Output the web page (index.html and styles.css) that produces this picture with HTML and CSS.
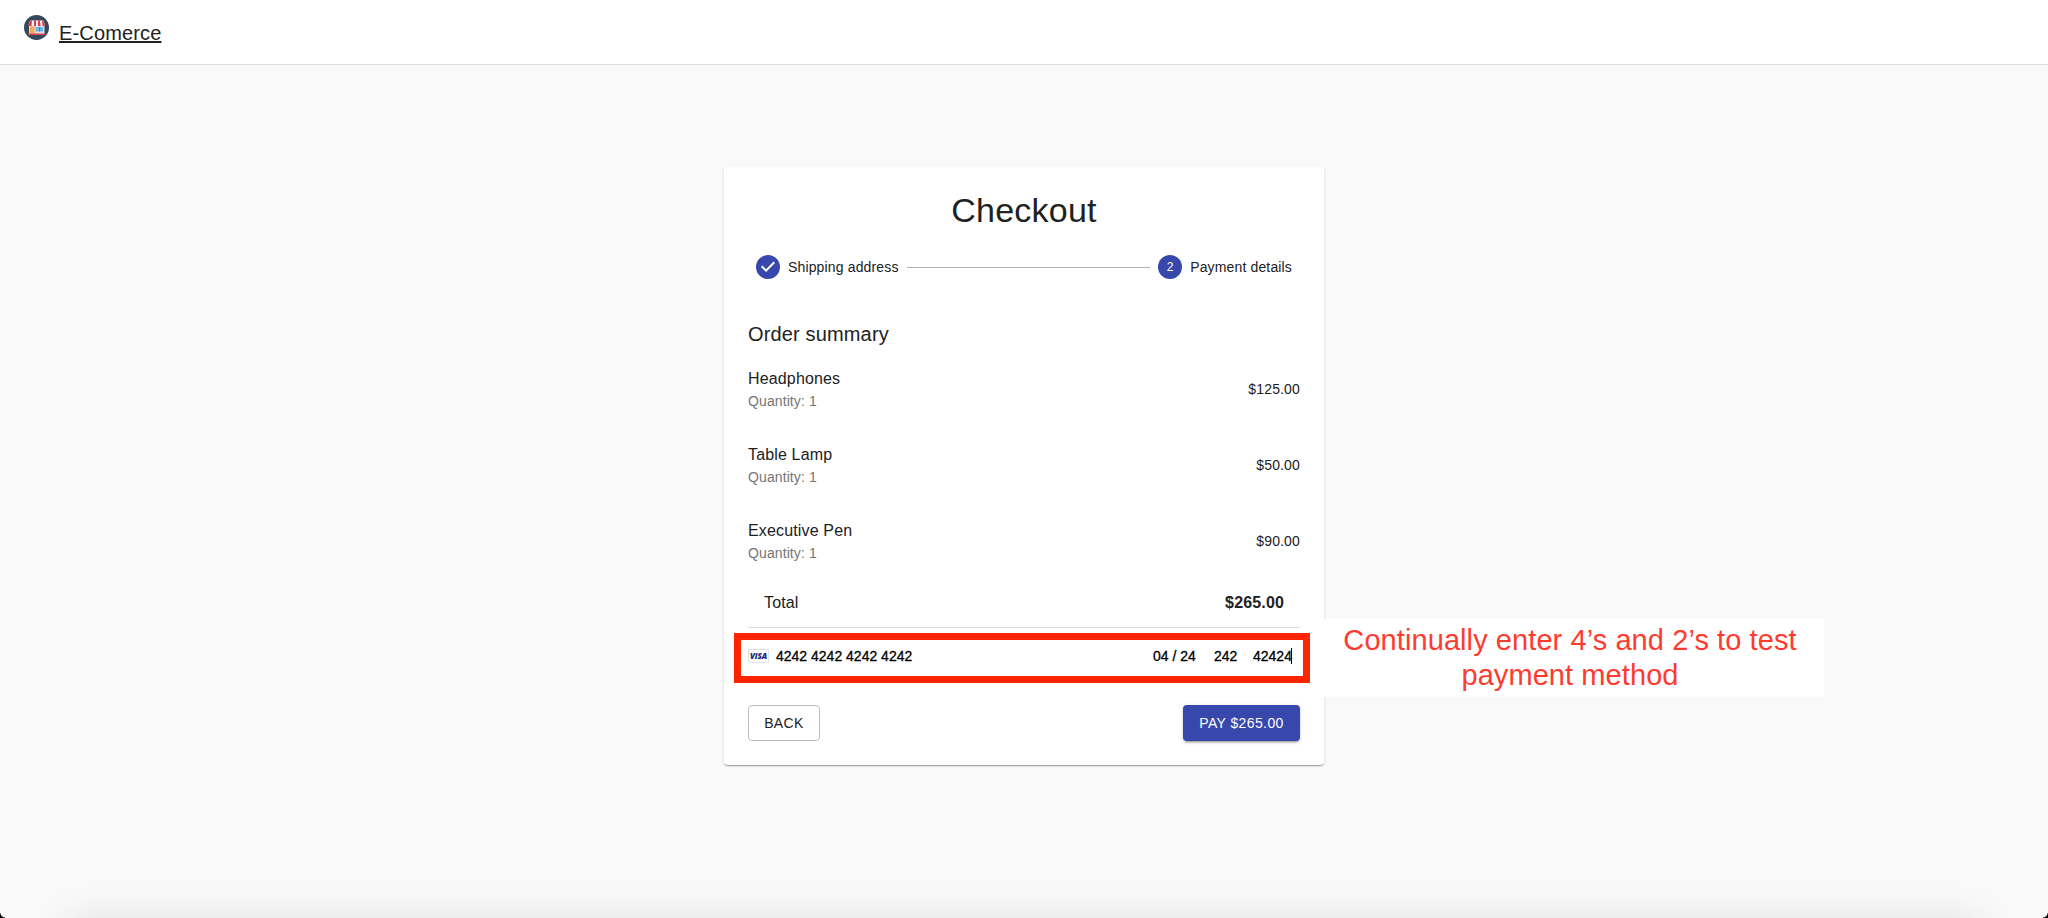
FILE: index.html
```html
<!DOCTYPE html>
<html lang="en">
<head>
<meta charset="utf-8">
<title>E-Comerce</title>
<link rel="stylesheet" href="styles.css">
</head>
<body>
<header class="appbar">
  <svg class="logo" viewBox="0 0 50 50">
    <circle cx="25" cy="25" r="25" fill="#34495a"/>
    <rect x="10" y="20" width="31" height="19" fill="#e3dce6"/>
    <path d="M12 11h27l3 10H9z" fill="#fff"/>
    <path d="M12 11h4l-1 11H9zM20 11h4v11h-4zM28 11h4l1 11h-5zM36 11h3l3 11h-5z" fill="#e5394d"/>
    <rect x="12" y="23" width="9" height="15" fill="#f3ab52"/>
    <rect x="23" y="24" width="15" height="9" fill="#6cb5ec"/>
    <path d="M30 24h2v9h-2z" fill="#3f83c8"/>
    <rect x="9" y="37" width="33" height="3" fill="#d84350"/>
  </svg>
  <a class="brand">E-Comerce</a>
</header>
<main class="page">
  <section class="card">
    <h1 class="title">Checkout</h1>
    <div class="stepper">
      <div class="step">
        <svg class="step-icon" viewBox="0 0 24 24"><path fill="#3747ac" d="M12 0a12 12 0 1 0 0 24 12 12 0 0 0 0-24zm-2 17l-5-5 1.4-1.4 3.6 3.6 7.6-7.6L19 8l-9 9z"/></svg>
        <span>Shipping address</span>
      </div>
      <div class="connector"></div>
      <div class="step">
        <span class="step-icon number">2</span>
        <span>Payment details</span>
      </div>
    </div>
    <h2 class="subtitle">Order summary</h2>
    <ul class="list">
      <li class="item"><div><p class="name">Headphones</p><p class="qty">Quantity: 1</p></div><span class="price">$125.00</span></li>
      <li class="item"><div><p class="name">Table Lamp</p><p class="qty">Quantity: 1</p></div><span class="price">$50.00</span></li>
      <li class="item"><div><p class="name">Executive Pen</p><p class="qty">Quantity: 1</p></div><span class="price">$90.00</span></li>
      <li class="total"><span>Total</span><strong>$265.00</strong></li>
    </ul>
    <div class="payment">
      <span class="visa">VISA</span>
      <span class="number-field">4242 4242 4242 4242</span>
      <span class="expiry">04 / 24</span>
      <span class="cvc">242</span>
      <span class="zip">42424</span>
      <div class="highlight"></div>
      <p class="note">Continually enter 4’s and 2’s to test<br>payment method</p>
    </div>
    <div class="actions">
      <button class="btn outlined">BACK</button>
      <button class="btn contained">PAY $265.00</button>
    </div>
  </section>
</main>
<div class="bottom-shade"></div>
<div class="corner left"></div>
<div class="corner right"></div>
</body>
</html>
```
FILE: styles.css
```css
* { box-sizing: border-box; }
body {
  margin: 0;
  height: 918px;
  overflow: hidden;
  background: #f9f9f9;
  color: #212121;
  font-family: "Liberation Sans", Arial, sans-serif;
}
h1, h2, p, ul { margin: 0; padding: 0; font-weight: 400; }
.appbar {
  height: 65px;
  padding: 0 24px;
  display: flex;
  align-items: flex-start;
  background: #fff;
  border-bottom: 1px solid #dedede;
}
.logo { width: 25px; height: 25px; margin: 15px 10px 0 0; }
.brand {
  margin-top: 17px;
  font-size: 20px;
  line-height: 32px;
  letter-spacing: 0.15px;
  text-decoration: underline;
  text-decoration-thickness: 2px;
  text-underline-offset: 1px;
}
.page { padding-top: 101px; display: flex; justify-content: center; }
.card {
  width: 600px;
  height: 599px;
  padding: 24px;
  background: #fff;
  border-radius: 4px;
  box-shadow: 0 2px 1px -1px rgba(0,0,0,.2), 0 1px 1px rgba(0,0,0,.14), 0 1px 3px rgba(0,0,0,.12);
}
.title { font-size: 34px; line-height: 41px; letter-spacing: 0.25px; text-align: center; }
.stepper { display: flex; align-items: center; padding: 24px 0 39px; }
.step {
  display: flex;
  align-items: center;
  gap: 8px;
  padding: 0 8px;
  font-size: 14px;
  line-height: 20px;
  letter-spacing: 0.15px;
}
.step-icon { width: 24px; height: 24px; }
.number {
  border-radius: 50%;
  background: #3747ac;
  color: #fff;
  font-size: 12px;
  line-height: 24px;
  letter-spacing: 0;
  text-align: center;
}
.connector { flex: 1; height: 1px; background: #b0b0b0; }
.subtitle { margin-bottom: 1px; font-size: 20px; line-height: 32px; letter-spacing: 0.15px; }
.list { list-style: none; }
.item { height: 76px; display: flex; align-items: center; justify-content: space-between; }
.name { font-size: 16px; line-height: 24px; letter-spacing: 0.15px; }
.qty { font-size: 14px; line-height: 20px; letter-spacing: 0.1px; color: #757575; }
.price { font-size: 14px; line-height: 20px; letter-spacing: 0.15px; }
.total {
  height: 49px;
  padding: 0 16px;
  display: flex;
  justify-content: space-between;
  font-size: 16px;
  line-height: 48px;
  letter-spacing: 0.15px;
  border-bottom: 1px solid #dcdcdc;
}
.payment {
  position: relative;
  height: 77px;
  padding-bottom: 21px;
  display: flex;
  align-items: center;
  color: #000;
  font-size: 14px;
  line-height: 18px;
  -webkit-text-stroke: 0.3px #000;
}
.visa {
  width: 21px;
  height: 14px;
  margin-right: 7px;
  border: 1px solid #e3e3e3;
  color: #20246f;
  font: italic 800 8px/12px "Open Sans", sans-serif;
  letter-spacing: -0.2px;
  text-align: center;
  -webkit-text-stroke: 0;
}
.number-field { flex: 1; }
.expiry { width: 61px; }
.cvc { width: 39px; }
.zip { width: 39px; margin-right: 8px; border-right: 1px solid #000; line-height: 16px; }
.highlight {
  position: absolute;
  top: 5px;
  left: -14px;
  width: 576px;
  height: 50px;
  border: 7px solid #ff2400;
}
.note {
  position: absolute;
  top: -9px;
  left: 568px;
  width: 508px;
  height: 78px;
  padding-top: 4px;
  background: #fff;
  color: #ff3b30;
  font-size: 29px;
  line-height: 35px;
  letter-spacing: 0.08px;
  text-align: center;
  white-space: nowrap;
  -webkit-text-stroke: 0;
}
.actions { display: flex; justify-content: space-between; }
.btn {
  height: 36px;
  padding: 0;
  border-radius: 4px;
  font: 400 14px/24px "Liberation Sans", Arial, sans-serif;
  letter-spacing: 0.4px;
}
.outlined { width: 72px; background: #fff; color: #212121; border: 1px solid #bdbdbd; }
.contained {
  width: 117px;
  border: 0;
  background: #3747ac;
  color: #fff;
  box-shadow: 0 3px 1px -2px rgba(0,0,0,.2), 0 2px 2px rgba(0,0,0,.14), 0 1px 5px rgba(0,0,0,.12);
}
.bottom-shade {
  position: fixed;
  left: 70px;
  right: 70px;
  top: 922px;
  height: 40px;
  box-shadow: 0 0 40px rgba(0,0,0,.13);
}
.corner { position: fixed; bottom: 0; width: 5px; height: 5px; }
.left { left: 0; background: radial-gradient(circle at 100% 0, transparent 4px, #000 5px); }
.right { right: 0; background: radial-gradient(circle at 0 0, transparent 4px, #000 5px); }
```
